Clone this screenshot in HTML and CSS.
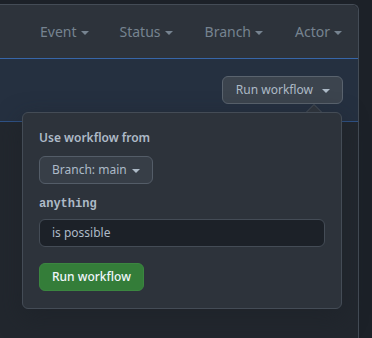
FILE: index.html
```html
<!DOCTYPE html>
<html>
<head>
<meta charset="utf-8">
<link rel="stylesheet" href="styles.css">
</head>
<body>
<div class="box">
  <div class="box-header">
    <div class="filter">Event<span class="caret"></span></div>
    <div class="filter">Status<span class="caret"></span></div>
    <div class="filter">Branch<span class="caret"></span></div>
    <div class="filter">Actor<span class="caret"></span></div>
  </div>
  <div class="dispatch">
    <div class="dispatch-menu">
      <button class="btn btn-top">Run workflow<span class="caret caret-wide"></span></button>
      <div class="popover">
        <div class="label">Use workflow from</div>
        <button class="btn btn-branch">Branch: main<span class="caret"></span></button>
        <div class="input-label">anything</div>
        <div class="input">is possible</div>
        <button class="btn btn-primary">Run workflow</button>
      </div>
    </div>
  </div>
</div>
</body>
</html>
```
FILE: styles.css
```css
html, body {
  margin: 0;
  padding: 0;
  background: #1c2128;
  overflow: hidden;
  height: 338px;
}
body {
  font-family: "Noto Sans", sans-serif;
  color: #adbac7;
  padding-top: 4px;
  box-sizing: border-box;
}
.box {
  width: 359px;
  height: 334px;
  box-sizing: border-box;
  background: #22272e;
  border: 1px solid #444c56;
  border-left: none;
  border-bottom: none;
  border-top-right-radius: 6px;
}
.box-header {
  height: 53px;
  display: flex;
  justify-content: flex-end;
  align-items: center;
  background: #2d333b;
  border-top-right-radius: 6px;
}
.filter {
  padding: 0 16px;
  font-size: 14px;
  line-height: 20px;
  color: #768390;
  display: flex;
  align-items: center;
}
.filter:first-child { padding-right: 15px; }
.caret {
  display: inline-block;
  width: 0;
  height: 0;
  margin-left: 4px;
  border-top: 4px solid currentColor;
  border-left: 4px solid transparent;
  border-right: 4px solid transparent;
  position: relative;
  top: 1px;
}
.caret-wide { margin-left: 9px; }
.dispatch {
  height: 62px;
  background: #253040;
  border-top: 1px solid #3766a8;
  border-bottom: 1px solid #2f5286;
  display: flex;
  justify-content: flex-end;
  align-items: center;
  padding-right: 15px;
}
.dispatch-menu {
  position: relative;
}
.btn {
  display: inline-flex;
  align-items: center;
  font-family: "Noto Sans", sans-serif;
  font-size: 12px;
  line-height: 20px;
  padding: 3px 12px;
  border-radius: 6px;
  border: 1px solid #545d68;
  background: #373e47;
  color: #adbac7;
  cursor: pointer;
}
.btn-top {
  background: #3c444e;
  border-color: #5a636e;
  padding-left: 13px;
}
.popover {
  position: absolute;
  top: calc(100% + 8px);
  right: 1px;
  width: 286px;
  padding: 14px 16px 17px;
  background: #2d333b;
  border: 1px solid #444c56;
  border-radius: 6px;
  box-shadow: 0 8px 24px rgba(28, 33, 40, 0.6);
  z-index: 2;
}
.popover::before,
.popover::after {
  content: "";
  position: absolute;
  border-style: solid;
  border-color: transparent;
}
.popover::before {
  top: -17px;
  right: 19px;
  border-width: 8px;
  border-bottom-color: #444c56;
}
.popover::after {
  top: -15px;
  right: 20px;
  border-width: 7px;
  border-bottom-color: #2d333b;
}
.label {
  font-size: 12px;
  font-weight: 600;
  line-height: 20px;
  margin-bottom: 8px;
  margin-top: 1px;
}
.btn-branch {
  margin-bottom: 10px;
}
.btn-branch .caret { margin-left: 5px; }
.input-label {
  font-family: "Liberation Mono", monospace;
  font-weight: 700;
  font-size: 12px;
  line-height: 20px;
  margin-bottom: 5px;
}
.input {
  font-size: 12px;
  line-height: 20px;
  padding: 3px 12px;
  background: #1c2128;
  border: 1px solid #444c56;
  border-radius: 6px;
  color: #adbac7;
  margin-bottom: 16px;
}
.btn-primary {
  background: #347d39;
  border-color: #3b8640;
  color: #f0f6fc;
  font-weight: 500;
}
```
